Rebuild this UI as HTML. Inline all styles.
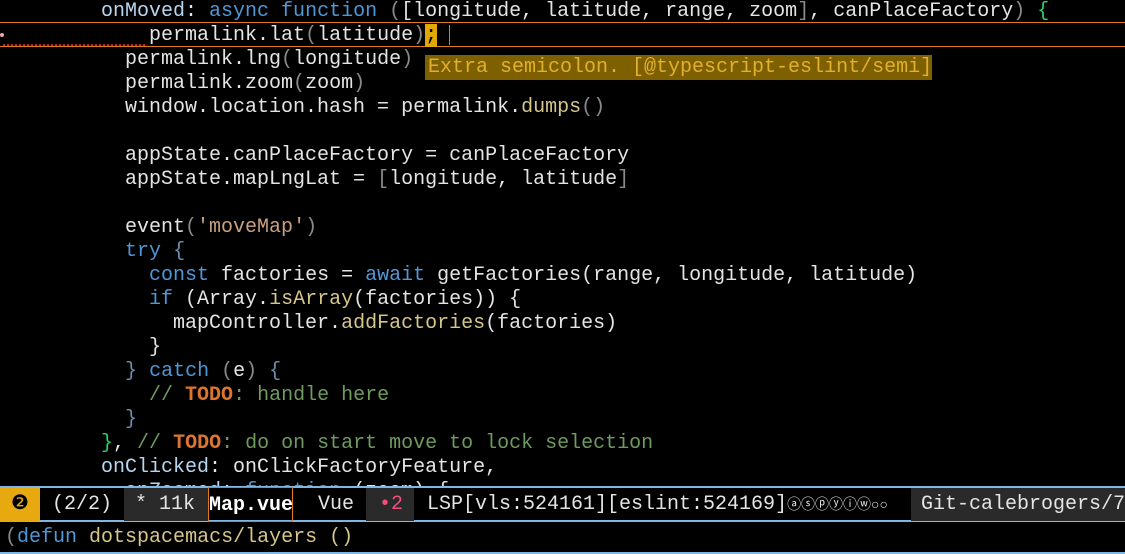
<!DOCTYPE html>
<html><head><meta charset="utf-8"><style>
body{margin:0;background:#000;width:1125px;height:554px;overflow:hidden;position:relative;font-family:"Liberation Mono",monospace;font-size:20px;color:#e4e4e4}
.l{position:absolute;left:5px;height:24px;line-height:24px;white-space:pre;margin-top:2px}
.k{color:#4f97d7}.p{color:#b7d7f0}.f{color:#d6c68a}.d{color:#8a8a8a}.b{color:#6e8fb0}.g{color:#2fd06a}
.s{color:#c8a080}.c{color:#6f9a5f}.t{color:#dc752f;font-weight:bold}
.ml{position:absolute;top:488px;height:33px;line-height:34px;white-space:pre;font-size:20px}
</style></head><body>
<div class="l" style="top:-2px"><span>        </span><span class="p">onMoved</span>: <span class="k">async function</span> <span class="d">(</span>[longitude, latitude, range, zoom<span class="d">]</span>, canPlaceFactory<span class="d">)</span> <span class="g">{</span></div>
<div style="position:absolute;left:0;top:22px;width:1125px;height:25px;border-top:1px solid #e07a20;border-bottom:1px solid #e07a20;box-sizing:border-box"></div>
<div style="position:absolute;left:3px;top:44px;width:142px;border-top:2px dotted #d02020"></div>
<div style="position:absolute;left:0;top:33px;width:4px;height:4px;background:#f8a0b0;border-radius:2px"></div>
<div class="l" style="top:22px">            permalink.lat<span class="d">(</span>latitude<span class="d">)</span><span style="background:#e0a800;color:#000">;</span></div>
<div style="position:absolute;left:449px;top:25px;width:1px;height:20px;background:#e07a20"></div>
<div class="l" style="top:46px">          permalink.lng<span class="d">(</span>longitude<span class="d">)</span></div>
<div style="position:absolute;left:425px;top:55px;width:507px;height:25px;background:#7f6000;color:#e0b030;line-height:25px;white-space:pre;padding-left:3px;box-sizing:border-box">Extra semicolon. [@typescript-eslint/semi]</div>
<div class="l" style="top:70px">          permalink.zoom<span class="d">(</span>zoom<span class="d">)</span></div>
<div class="l" style="top:94px">          window.location.hash = permalink.<span class="f">dumps</span><span class="d">()</span></div>
<div class="l" style="top:142px">          appState.canPlaceFactory = canPlaceFactory</div>
<div class="l" style="top:166px">          appState.mapLngLat = <span class="d">[</span>longitude, latitude<span class="d">]</span></div>
<div class="l" style="top:214px">          event<span class="d">(</span><span class="s">'moveMap'</span><span class="d">)</span></div>
<div class="l" style="top:238px">          <span class="k">try</span> <span class="b">{</span></div>
<div class="l" style="top:262px">            <span class="k">const</span> factories = <span class="k">await</span> getFactories(range, longitude, latitude)</div>
<div class="l" style="top:286px">            <span class="k">if</span> (Array.<span class="f">isArray</span>(factories)) {</div>
<div class="l" style="top:310px">              mapController.<span class="f">addFactories</span>(factories)</div>
<div class="l" style="top:334px">            }</div>
<div class="l" style="top:358px">          <span class="b">}</span> <span class="k">catch</span> <span class="d">(</span>e<span class="d">)</span> <span class="b">{</span></div>
<div class="l" style="top:382px">            <span class="c">// </span><span class="t">TODO</span><span class="c">: handle here</span></div>
<div class="l" style="top:406px">          <span class="b">}</span></div>
<div class="l" style="top:430px">        <span class="g">}</span>, <span class="c">// </span><span class="t">TODO</span><span class="c">: do on start move to lock selection</span></div>
<div class="l" style="top:454px">        <span class="p">onClicked</span>: onClickFactoryFeature,</div>
<div class="l" style="top:478px">          <span class="p">onZoomed</span>: <span class="k">function</span> (zoom) {</div>
<div style="position:absolute;left:0;top:486px;width:1125px;height:36px;background:#000;border-top:2px solid #7eb6e4;border-bottom:2px solid #7eb6e4;box-sizing:border-box"></div>
<div class="ml" style="left:0;width:40px;background:#e8a810;color:#000;text-align:center">❷</div>
<div class="ml" style="left:40px;width:84px;padding-left:12px;box-sizing:border-box">(2/2)</div>
<div class="ml" style="left:124px;width:84px;background:#2a2a2a;padding-left:11px;box-sizing:border-box">* 11k</div>
<div class="ml" style="left:208px;width:85px;height:35px;top:487px;line-height:35px;border:1px solid #e07a20;box-sizing:border-box;font-weight:bold;color:#fff">Map.vue</div>
<div class="ml" style="left:293px;width:73px;padding-left:25px;box-sizing:border-box">Vue</div>
<div class="ml" style="left:366px;width:48px;background:#2a2a2a;color:#f0507a;padding-left:13px;box-sizing:border-box">•2</div>
<div class="ml" style="left:414px;width:497px;padding-left:13px;box-sizing:border-box">LSP[vls:524161][eslint:524169]<span style="font-size:14px">ⓐⓢⓟⓨⓘⓦ○○</span></div>
<div class="ml" style="left:911px;width:214px;background:#2a2a2a;padding-left:10px;box-sizing:border-box">Git-calebrogers/7</div>
<div class="l" style="top:524px;left:5px"><span class="d">(</span><span class="k">defun</span> <span class="f">dotspacemacs/layers</span> <span class="f">()</span></div>
<div style="position:absolute;left:0;top:552px;width:1125px;height:2px;background:#7eb6e4"></div>
</body></html>
